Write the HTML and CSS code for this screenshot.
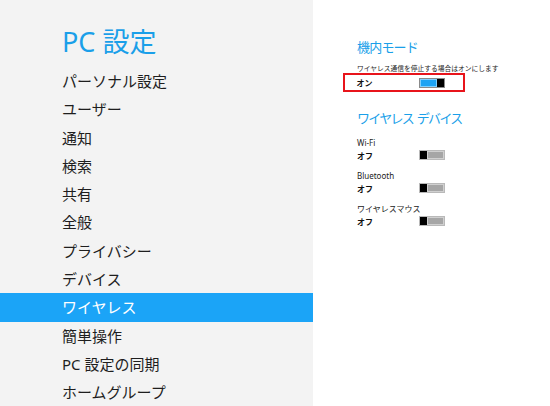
FILE: index.html
```html
<!DOCTYPE html>
<html lang="ja">
<head>
<meta charset="utf-8">
<link rel="stylesheet" href="styles.css">
</head>
<body>
<div class="app">
  <nav class="nav">
    <h1 class="nav-title">PC 設定</h1>
    <ul class="nav-list">
      <li class="nav-item">パーソナル設定</li>
      <li class="nav-item">ユーザー</li>
      <li class="nav-item">通知</li>
      <li class="nav-item">検索</li>
      <li class="nav-item">共有</li>
      <li class="nav-item">全般</li>
      <li class="nav-item">プライバシー</li>
      <li class="nav-item">デバイス</li>
      <li class="nav-item nav-item--active">ワイヤレス</li>
      <li class="nav-item">簡単操作</li>
      <li class="nav-item">PC 設定の同期</li>
      <li class="nav-item">ホームグループ</li>
    </ul>
  </nav>
  <main class="content">
    <h2 class="section-title">機内モード</h2>
    <p class="desc">ワイヤレス通信を停止する場合はオンにします</p>
    <div class="highlight">
      <span class="state">オン</span>
      <span class="toggle toggle--on"><span class="fill"></span><span class="thumb"></span></span>
    </div>
    <h2 class="section-title section-title--second">ワイヤレス デバイス</h2>
    <div class="devices">
      <div class="device">
        <div class="label">Wi-Fi</div>
        <div class="row">
          <span class="state">オフ</span>
          <span class="toggle toggle--off"><span class="thumb"></span><span class="fill"></span></span>
        </div>
      </div>
      <div class="device">
        <div class="label">Bluetooth</div>
        <div class="row">
          <span class="state">オフ</span>
          <span class="toggle toggle--off"><span class="thumb"></span><span class="fill"></span></span>
        </div>
      </div>
      <div class="device">
        <div class="label">ワイヤレスマウス</div>
        <div class="row">
          <span class="state">オフ</span>
          <span class="toggle toggle--off"><span class="thumb"></span><span class="fill"></span></span>
        </div>
      </div>
    </div>
  </main>
</div>
</body>
</html>
```

FILE: styles.css
```css
* { box-sizing: border-box; }
html, body {
  margin: 0;
  padding: 0;
  width: 550px;
  height: 406px;
  overflow: hidden;
  background: #ffffff;
  font-family: "Noto Sans", "Noto Sans CJK JP", sans-serif;
}
.app {
  display: flex;
  height: 406px;
}
.nav {
  width: 313px;
  flex: none;
  background: #f3f3f3;
  padding-top: 25px;
}
.nav-title {
  margin: 0 0 0 62px;
  font-size: 27px;
  font-weight: 400;
  line-height: 34px;
  height: 42px;
  color: #1a9fe9;
}
.nav-list {
  list-style: none;
  margin: 0;
  padding: 0;
}
.nav-item {
  height: 28.3px;
  line-height: 28.3px;
  padding-left: 62px;
  font-size: 15px;
  color: #1e1e1e;
}
.nav-item--active {
  background: #1ba4f7;
  color: #ffffff;
}
.content {
  flex: 1;
  padding-left: 44px;
  padding-top: 39px;
}
.section-title {
  margin: 0;
  font-size: 13px;
  font-weight: 400;
  line-height: 16px;
  letter-spacing: -0.8px;
  color: #1a9fe9;
}
.desc {
  margin: 9px 0 0 0;
  font-size: 6.75px;
  line-height: 10px;
  color: #222;
  white-space: nowrap;
}
.highlight {
  margin: -1px 0 0 -14px;
  width: 122px;
  height: 19px;
  border: 2.5px solid #e8141b;
  display: flex;
  align-items: center;
  padding-left: 11.5px;
}
.state {
  font-size: 8px;
  font-weight: 700;
  color: #111;
  width: 62px;
  flex: none;
}
.toggle {
  display: flex;
  width: 26px;
  height: 10px;
  border: 1px solid #b9b9b9;
  flex: none;
}
.toggle--on { border-color: #8a8a8a; }
.toggle .fill { flex: 1; }
.toggle--on .fill {
  background: #1ea3f3;
  border: 1px solid #7fd0ff;
}
.toggle--off .fill {
  background: #a6a6a6;
  border: 1px solid #d0d0d0;
}
.toggle .thumb {
  width: 7px;
  background: #000;
}
.section-title--second {
  margin-top: 18px;
  letter-spacing: -1.7px;
  word-spacing: 2px;
}
.devices {
  padding-top: 12px;
}
.device {
  height: 33px;
}
.label {
  font-size: 8px;
  line-height: 10px;
  color: #222;
}
.row {
  display: flex;
  align-items: center;
  height: 12px;
  margin-top: 1px;
}
```
